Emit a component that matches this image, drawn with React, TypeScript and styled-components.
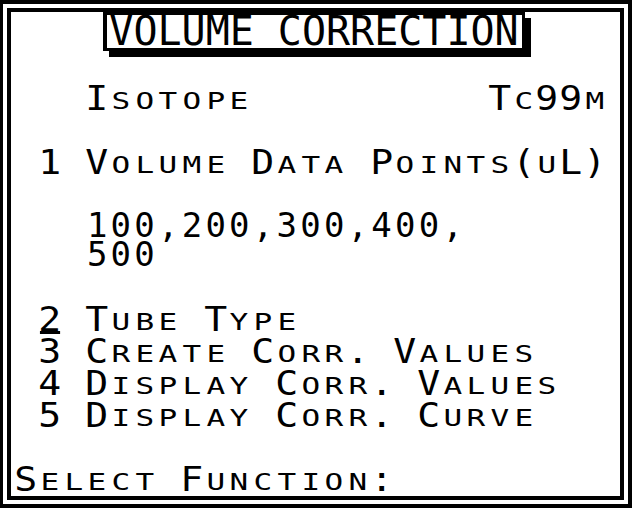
import React from 'react';
import styled, { createGlobalStyle } from 'styled-components';

const CELL = 23.7;

const GlobalStyle = createGlobalStyle`
  html, body {
    margin: 0;
    padding: 0;
    background: #fff;
  }
`;

const Screen = styled.div`
  box-sizing: border-box;
  width: 632px;
  height: 508px;
  border: 4px solid #000;
  border-left-width: 3px;
  padding: 4px;
  background: #fff;
`;

const Panel = styled.div`
  box-sizing: border-box;
  height: 100%;
  border: 4px solid #000;
  display: flex;
  flex-direction: column;
  padding-left: 3.3px;
  color: #000;
  font-family: 'DejaVu Sans Mono', 'Liberation Mono', monospace;
`;

const TitleBar = styled.div`
  display: flex;
  padding-left: 89px;
`;

const TitleBox = styled.div`
  border: 3px solid #000;
  border-left-width: 4px;
  box-shadow: 6px 6px 0 #000;
  padding: 0 3px 0 2px;
  height: 33px;
  line-height: 33px;
  font-size: 40px;
  white-space: pre;
  background: #fff;
`;

const Line = styled.div<{ $top?: number }>`
  display: flex;
  margin-top: ${({ $top = 0 }) => $top}px;
  height: 32px;
  white-space: nowrap;
`;

// the list of data points wraps onto a second row, a little tighter
const Values = styled.div`
  margin-top: 32.5px;
  margin-left: ${CELL * 3 + 1.5}px;
  width: ${CELL * 16 + 4}px;
  font-size: 34px;
  line-height: 29px;
  letter-spacing: 3.23px;
  white-space: pre-line;
`;

// small capitals get a taller line so their baseline sits with the capitals
const Cell = styled.span<{ $small?: boolean; $cursor?: boolean }>`
  position: relative;
  display: block;
  flex: 0 0 ${CELL}px;
  height: 32px;
  text-align: center;
  font-size: ${({ $small }) => ($small ? 23 : 34)}px;
  line-height: ${({ $small }) => ($small ? 39.6 : 32)}px;
  transform: scaleX(${({ $small }) => ($small ? 1.35 : 1.12)});

  ${({ $cursor }) =>
    $cursor &&
    `
    &::after {
      content: '';
      position: absolute;
      left: 3px;
      right: 3px;
      bottom: 1px;
      height: 3px;
      background: #000;
    }
  `}
`;

interface LcdProps {
  text: string;
  cursorAt?: number;
}

// one character per cell, lower case shown as small capitals like the LCD does
const Lcd: React.FC<LcdProps> = ({ text, cursorAt }) => (
  <>
    {text.split('').map((ch, i) => {
      const small = ch !== ch.toUpperCase();
      return (
        <Cell key={i} $small={small} $cursor={i === cursorAt}>
          {ch === ' ' ? '\u00a0' : ch.toUpperCase()}
        </Cell>
      );
    })}
  </>
);

export default function App() {
  return (
    <>
      <GlobalStyle />
      <Screen>
        <Panel>
          <TitleBar>
            <TitleBox>VOLUME CORRECTION</TitleBox>
          </TitleBar>
          <Line $top={31}>
            <Lcd text="   Isotope          Tc99m" />
          </Line>
          <Line $top={32}>
            <Lcd text=" 1 Volume Data Points(uL)" />
          </Line>
          <Values>{'100,200,300,400,\n500'}</Values>
          <Line $top={34.5}>
            <Lcd text=" 2 Tube Type" cursorAt={1} />
          </Line>
          <Line>
            <Lcd text=" 3 Create Corr. Values" />
          </Line>
          <Line>
            <Lcd text=" 4 Display Corr. Values" />
          </Line>
          <Line>
            <Lcd text=" 5 Display Corr. Curve" />
          </Line>
          <Line $top={32}>
            <Lcd text="Select Function:" />
          </Line>
        </Panel>
      </Screen>
    </>
  );
}
